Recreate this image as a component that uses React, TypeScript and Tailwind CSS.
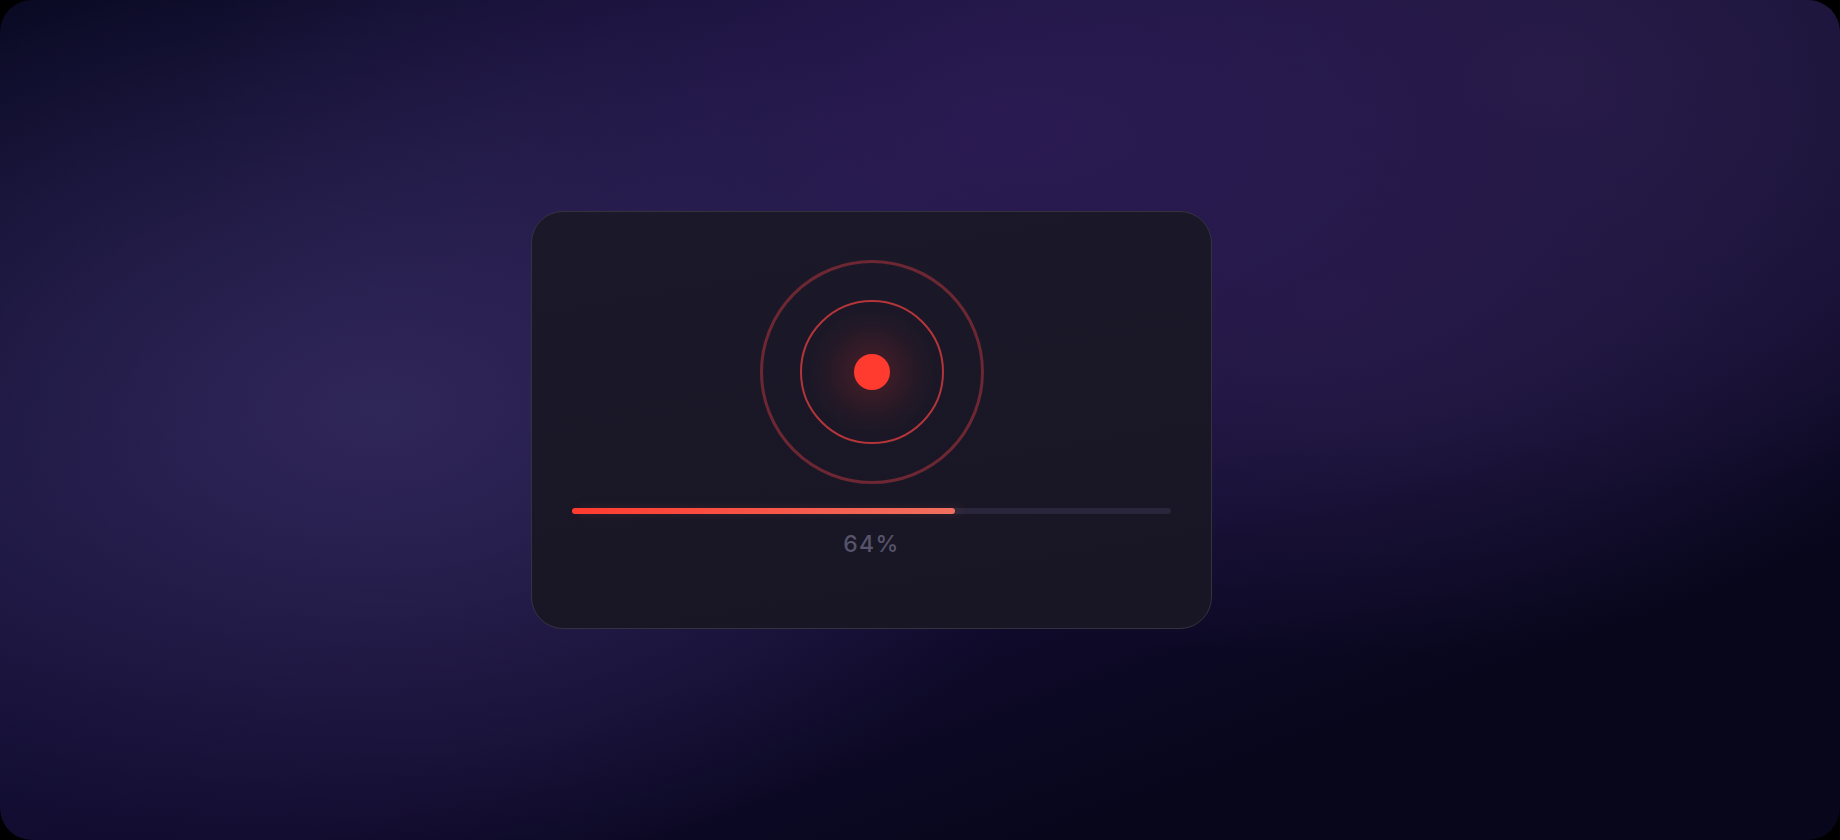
const App = () => {
  const progress = 64;

  return (
    <div className="h-[840px] w-full bg-black">
      <div className="flex h-full w-full items-center justify-center overflow-hidden rounded-[32px] bg-[radial-gradient(ellipse_720px_460px_at_380px_410px,#302759_0%,rgba(48,39,89,0)_100%),radial-gradient(ellipse_820px_420px_at_1010px_130px,#2a1a52_0%,rgba(42,26,82,0)_100%),radial-gradient(ellipse_640px_360px_at_1330px_300px,#241a44_0%,rgba(36,26,68,0)_100%),radial-gradient(ellipse_700px_420px_at_1560px_80px,#261b44_0%,rgba(38,27,68,0)_100%),linear-gradient(160deg,#0a0a24_0%,#16113a_35%,#110b2e_62%,#07061a_82%,#07061a_100%)] pr-[97px] font-['Inter',sans-serif]">
        <div className="flex h-[418px] w-[681px] flex-col items-center rounded-[32px] border border-[#35323f] bg-[linear-gradient(170deg,#1b1929_0%,#181624_100%)] px-[40px] pt-[48px]">
          <div className="flex h-[224px] w-[224px] items-center justify-center rounded-full border-[3px] border-[#6c2733]">
            <div className="flex h-[144px] w-[144px] items-center justify-center rounded-full border-2 border-[#b3363a]">
              <div className="h-[36px] w-[36px] rounded-full bg-[#ff3b30] shadow-[0_0_46px_14px_rgba(255,59,48,0.28)]" />
            </div>
          </div>
          <div className="mt-[24px] h-[6px] w-[599px] rounded-full bg-[#29253a]">
            <div
              className="h-full rounded-full bg-[linear-gradient(90deg,#ff3b30_0%,#f0705f_100%)] shadow-[6px_0_10px_rgba(240,112,95,0.15)]"
              style={{ width: `${progress}%` }}
            />
          </div>
          <div className="mt-[16px] text-[23px] leading-[28px] font-medium tracking-[0.06em] text-[#57536a]">
            {progress}%
          </div>
        </div>
      </div>
    </div>
  );
};

export default App;
